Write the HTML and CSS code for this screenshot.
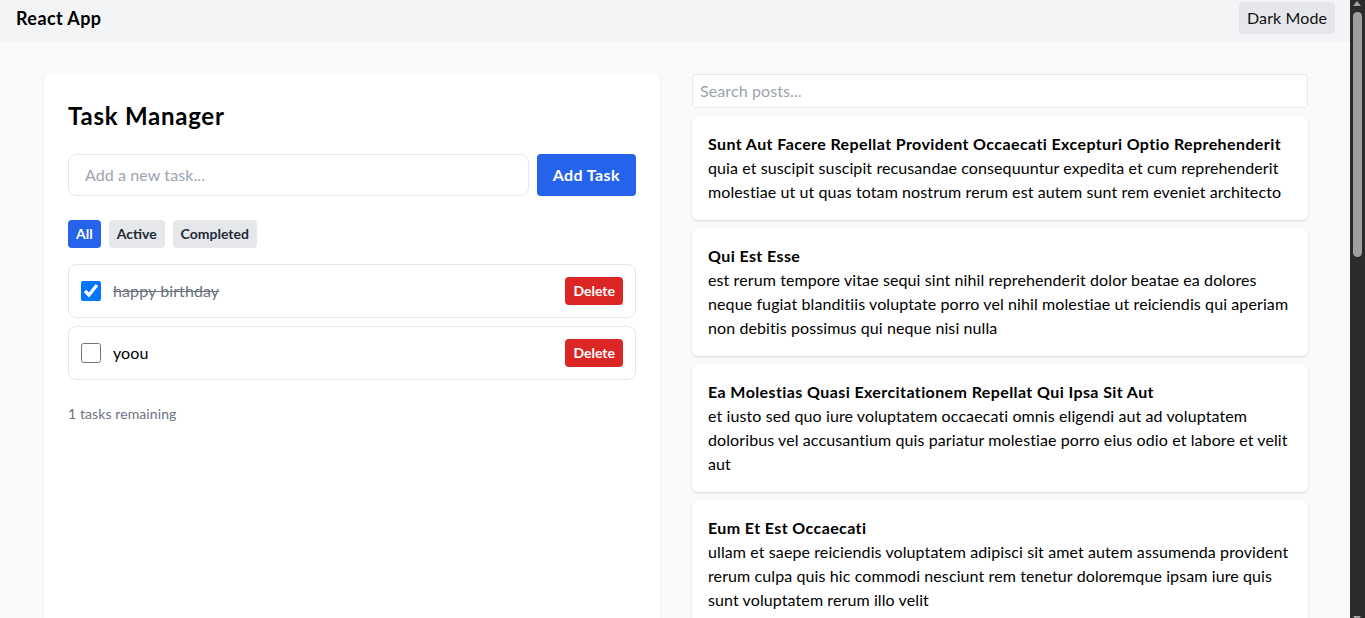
FILE: index.html
```html
<!DOCTYPE html>
<html lang="en">
<head>
<meta charset="utf-8">
<title>React App</title>
<link rel="stylesheet" href="styles.css">
</head>
<body>
<div class="page">
<header class="topbar">
  <span class="brand">React App</span>
  <button class="mode-btn">Dark Mode</button>
</header>
<main class="main">
  <div class="layout">
    <section class="card">
      <h1 class="title">Task Manager</h1>
      <div class="add-row">
        <input class="task-input" type="text" placeholder="Add a new task...">
        <button class="add-btn">Add Task</button>
      </div>
      <div class="filters">
        <button class="filter filter-active">All</button>
        <button class="filter">Active</button>
        <button class="filter">Completed</button>
      </div>
      <ul class="tasks">
        <li class="task">
          <input class="check" type="checkbox" checked>
          <span class="task-text done">happy birthday</span>
          <button class="del-btn">Delete</button>
        </li>
        <li class="task">
          <input class="check" type="checkbox">
          <span class="task-text">yoou</span>
          <button class="del-btn">Delete</button>
        </li>
      </ul>
      <p class="remaining">1 tasks remaining</p>
    </section>
    <section class="posts">
      <input class="search" type="text" placeholder="Search posts...">
      <article class="post"><h2 class="post-title">sunt aut facere repellat provident occaecati excepturi optio reprehenderit</h2><p class="post-body">quia et suscipit suscipit recusandae consequuntur expedita et cum reprehenderit molestiae ut ut quas totam nostrum rerum est autem sunt rem eveniet architecto</p></article>
      <article class="post"><h2 class="post-title">qui est esse</h2><p class="post-body">est rerum tempore vitae sequi sint nihil reprehenderit dolor beatae ea dolores neque fugiat blanditiis voluptate porro vel nihil molestiae ut reiciendis qui aperiam non debitis possimus qui neque nisi nulla</p></article>
      <article class="post"><h2 class="post-title">ea molestias quasi exercitationem repellat qui ipsa sit aut</h2><p class="post-body">et iusto sed quo iure voluptatem occaecati omnis eligendi aut ad voluptatem doloribus vel accusantium quis pariatur molestiae porro eius odio et labore et velit aut</p></article>
      <article class="post"><h2 class="post-title">eum et est occaecati</h2><p class="post-body">ullam et saepe reiciendis voluptatem adipisci sit amet autem assumenda provident rerum culpa quis hic commodi nesciunt rem tenetur doloremque ipsam iure quis sunt voluptatem rerum illo velit</p></article>
      <article class="post"><h2 class="post-title">nesciunt quas odio</h2><p class="post-body">repudiandae veniam quaerat sunt sed alias aut fugiat sit autem sed est voluptatem omnis possimus esse voluptatibus quis est aut tenetur dolor neque</p></article>
      <article class="post"><h2 class="post-title">dolorem eum magni eos aperiam quia</h2><p class="post-body">ut aspernatur corporis harum nihil quis provident sequi mollitia nobis aliquid molestiae perspiciatis et ea nemo ab reprehenderit accusantium quas voluptate dolores velit et doloremque molestiae</p></article>
      <article class="post"><h2 class="post-title">magnam facilis autem</h2><p class="post-body">dolore placeat quibusdam ea quo vitae magni quis enim qui quis quo nemo aut saepe quidem repellat excepturi ut quia sunt ut sequi eos ea sed quas</p></article>
      <article class="post"><h2 class="post-title">dolorem dolore est ipsam</h2><p class="post-body">dignissimos aperiam dolorem qui eum facilis quibusdam animi sint suscipit qui sint possimus cum quaerat magni maiores excepturi ipsam ut commodi dolor voluptatum modi aut vitae</p></article>
      <article class="post"><h2 class="post-title">nesciunt iure omnis dolorem tempora et accusantium</h2><p class="post-body">consectetur animi nesciunt iure dolore enim quia ad veniam autem ut quam aut nobis et est aut quod aut provident voluptas autem voluptas</p></article>
      <article class="post"><h2 class="post-title">optio molestias id quia eum</h2><p class="post-body">quo et expedita modi cum officia vel magni doloribus qui repudiandae vero nisi sit quos veniam quod sed accusamus veritatis error</p></article>
    </section>
  </div>
</main>
</div>
<div class="scrollbar" aria-hidden="true">
  <span class="sb-up"></span>
  <span class="sb-thumb"></span>
  <span class="sb-down"></span>
</div>
</body>
</html>
```
FILE: styles.css
```css
* { box-sizing: border-box; }
body {
  margin: 0;
  font-family: "Lato", "Noto Sans", sans-serif;
  font-size: 16px;
  line-height: 24px;
  letter-spacing: 0.1px;
  font-variant-ligatures: none;
  color: #000;
  background: #f9fafb;
}
.page { margin-right: 15px; }
.scrollbar {
  position: fixed;
  top: 0;
  right: 0;
  width: 15px;
  height: 100vh;
  background: #2b2b2b;
}
.sb-up {
  position: absolute;
  top: 1px;
  left: 3px;
  width: 0;
  height: 0;
  border-left: 4.5px solid transparent;
  border-right: 4.5px solid transparent;
  border-bottom: 5px solid #a3a3a3;
}
.sb-down {
  position: absolute;
  bottom: -3px;
  left: 3px;
  width: 0;
  height: 0;
  border-left: 4.5px solid transparent;
  border-right: 4.5px solid transparent;
  border-top: 5px solid #a3a3a3;
}
.sb-thumb {
  position: absolute;
  top: 12px;
  left: 3px;
  width: 9px;
  height: 245px;
  border-radius: 5px;
  background: #9f9f9f;
}
button, input { font-family: inherit; letter-spacing: inherit; }
.topbar {
  display: flex;
  justify-content: space-between;
  align-items: center;
  padding: 2px 15px 8px 16px;
  background: #f3f4f6;
}
.brand { font-size: 18px; font-weight: 700; line-height: 28px; letter-spacing: 0.4px; }
.mode-btn {
  border: 0;
  background: #e5e7eb;
  border-radius: 4px;
  padding: 4px 8px;
  font-size: 16px;
  line-height: 24px;
  color: #111;
}
.main { padding: 32px 42px 32px 44px; }
.layout {
  display: grid;
  grid-template-columns: 1fr 1fr;
  gap: 32px;
  align-items: start;
}
.card {
  background: #fff;
  border-radius: 8px;
  box-shadow: 0 1px 3px rgba(0,0,0,0.06), 0 1px 2px rgba(0,0,0,0.03);
  padding: 24px;
  min-height: 1380px;
}
.title { margin: 0 0 20px; font-size: 24px; line-height: 36px; font-weight: 700; letter-spacing: 0.75px; }
.add-row { display: flex; gap: 8px; margin-bottom: 24px; }
.task-input {
  flex: 1;
  min-width: 0;
  border: 1px solid #e5e7eb;
  border-radius: 8px;
  padding: 8px 16px;
  font-size: 16px;
  line-height: 24px;
  outline: none;
}
.task-input::placeholder, .search::placeholder { color: #9ca3af; }
.add-btn {
  border: 0;
  background: #2563eb;
  color: #fff;
  border-radius: 4px;
  padding: 9px 16px;
  font-size: 16px;
  line-height: 24px;
  font-weight: 700;
  letter-spacing: 0.4px;
}
.filters { display: flex; gap: 8px; margin-bottom: 16px; }
.filter {
  border: 0;
  background: #e5e7eb;
  color: #1f2937;
  border-radius: 4px;
  padding: 4px 8px;
  font-size: 14px;
  line-height: 20px;
  font-weight: 700;
  letter-spacing: 0;
}
.filter-active { background: #2563eb; color: #fff; }
.tasks { list-style: none; margin: 0; padding: 0; display: flex; flex-direction: column; gap: 8px; }
.task {
  display: flex;
  align-items: center;
  border: 1px solid #e5e7eb;
  border-radius: 8px;
  padding: 12px;
}
.check { width: 20px; height: 20px; margin: 0 12px 0 0; accent-color: #0075ff; }
.task-text { flex: 1; font-size: 16px; }
.done { text-decoration: line-through; color: #6b7280; }
.del-btn {
  border: 0;
  background: #dc2626;
  color: #fff;
  border-radius: 4px;
  padding: 4px 8px;
  font-size: 14px;
  line-height: 20px;
  font-weight: 700;
  letter-spacing: 0;
}
.remaining { margin: 24px 0 0; font-size: 14px; line-height: 20px; color: #6b7280; }
.posts { display: flex; flex-direction: column; gap: 8px; }
.search {
  border: 1px solid #e5e7eb;
  border-radius: 4px;
  padding: 4px 7px;
  font-size: 16px;
  line-height: 24px;
  outline: none;
  background: #fff;
}
.post {
  background: #fff;
  border-radius: 6px;
  box-shadow: 0 1px 3px rgba(0,0,0,0.1), 0 1px 2px rgba(0,0,0,0.06);
  padding: 16px;
}
.post-title { margin: 0; font-size: 16px; line-height: 24px; font-weight: 700; letter-spacing: 0.4px; text-transform: capitalize; }
.post-body { margin: 0; }
```
